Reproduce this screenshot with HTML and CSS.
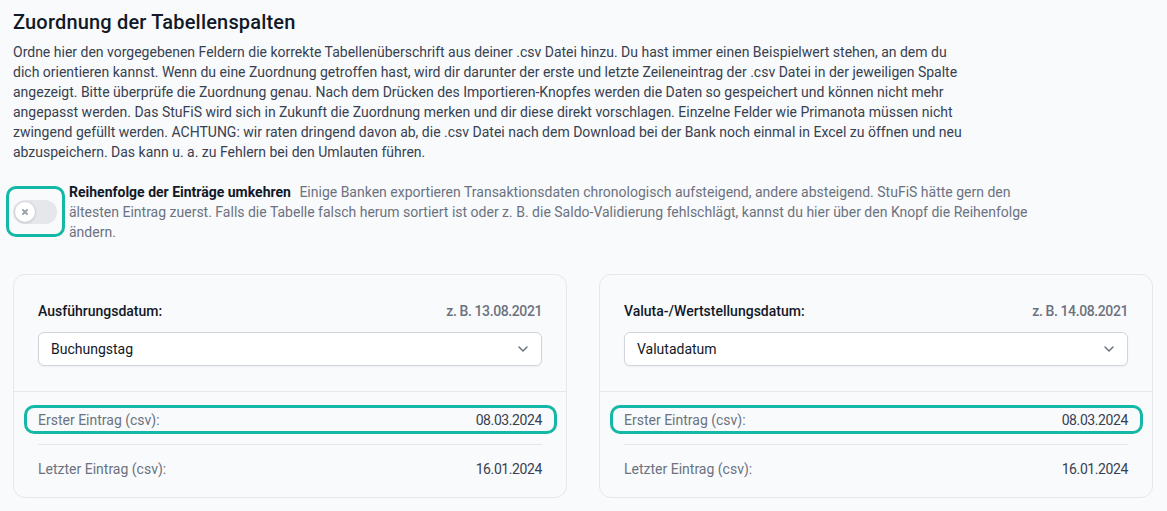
FILE: index.html
```html
<!DOCTYPE html>
<html lang="de">
<head>
<meta charset="utf-8">
<title>Zuordnung der Tabellenspalten</title>
<link rel="stylesheet" href="styles.css">
</head>
<body>
<main class="page">
  <h2 class="title">Zuordnung der Tabellenspalten</h2>
  <p class="intro">Ordne hier den vorgegebenen Feldern die korrekte Tabellenüberschrift aus deiner .csv Datei hinzu. Du hast immer einen Beispielwert stehen, an dem du dich orientieren kannst. Wenn du eine Zuordnung getroffen hast, wird dir darunter der erste und letzte Zeileneintrag der .csv Datei in der jeweiligen Spalte angezeigt. Bitte überprüfe die Zuordnung genau. Nach dem Drücken des Importieren-Knopfes werden die Daten so gespeichert und können nicht mehr angepasst werden. Das StuFiS wird sich in Zukunft die Zuordnung merken und dir diese direkt vorschlagen. Einzelne Felder wie Primanota müssen nicht zwingend gefüllt werden. ACHTUNG: wir raten dringend davon ab, die .csv Datei nach dem Download bei der Bank noch einmal in Excel zu öffnen und neu abzuspeichern. Das kann u. a. zu Fehlern bei den Umlauten führen.</p>

  <div class="switch-group">
    <div class="switch-wrap">
      <button class="switch" type="button" role="switch" aria-checked="false">
        <span class="knob">
          <svg viewBox="0 0 12 12" fill="none" aria-hidden="true"><path d="M4 8l2-2m0 0l2-2M6 6L4 4m2 2l2 2" stroke="currentColor" stroke-width="2" stroke-linecap="round" stroke-linejoin="round"/></svg>
        </span>
      </button>
    </div>
    <p class="switch-text"><strong class="switch-label">Reihenfolge der Einträge umkehren</strong> Einige Banken exportieren Transaktionsdaten chronologisch aufsteigend, andere absteigend. StuFiS hätte gern den ältesten Eintrag zuerst. Falls die Tabelle falsch herum sortiert ist oder z. B. die Saldo-Validierung fehlschlägt, kannst du hier über den Knopf die Reihenfolge ändern.</p>
  </div>

  <div class="cards">
    <section class="card">
      <div class="card-head">
        <div class="field-row">
          <span class="field-label">Ausführungsdatum:</span>
          <span class="example">z. B. 13.08.2021</span>
        </div>
        <div class="select">
          <span>Buchungstag</span>
          <svg class="chevron" viewBox="0 0 20 20" fill="none" aria-hidden="true"><path d="M6 8l4 4 4-4" stroke="currentColor" stroke-width="1.5" stroke-linecap="round" stroke-linejoin="round"/></svg>
        </div>
      </div>
      <dl class="rows">
        <div class="row highlight"><dt>Erster Eintrag (csv):</dt><dd>08.03.2024</dd></div>
        <div class="row"><dt>Letzter Eintrag (csv):</dt><dd>16.01.2024</dd></div>
      </dl>
    </section>

    <section class="card">
      <div class="card-head">
        <div class="field-row">
          <span class="field-label">Valuta-/Wertstellungsdatum:</span>
          <span class="example">z. B. 14.08.2021</span>
        </div>
        <div class="select">
          <span>Valutadatum</span>
          <svg class="chevron" viewBox="0 0 20 20" fill="none" aria-hidden="true"><path d="M6 8l4 4 4-4" stroke="currentColor" stroke-width="1.5" stroke-linecap="round" stroke-linejoin="round"/></svg>
        </div>
      </div>
      <dl class="rows">
        <div class="row highlight"><dt>Erster Eintrag (csv):</dt><dd>08.03.2024</dd></div>
        <div class="row"><dt>Letzter Eintrag (csv):</dt><dd>16.01.2024</dd></div>
      </dl>
    </section>
  </div>
</main>
</body>
</html>
```
FILE: styles.css
```css
* {
  box-sizing: border-box;
}

body {
  margin: 0;
  background: #f9fafb;
  font-family: Roboto, "Liberation Sans", sans-serif;
  font-size: 14px;
  line-height: 20px;
  color: #374151;
}

.page {
  padding: 8px 14px 0 13px;
}

.title {
  margin: 0;
  font-size: 20px;
  line-height: 28px;
  font-weight: 500;
  letter-spacing: 0.18px;
  color: #111827;
}

.intro {
  margin: 6px 0 0;
  max-width: 960px;
  color: #374151;
}

/* toggle */
.switch-group {
  margin-top: 20px;
  display: flex;
  align-items: center;
  gap: 12px;
}

.switch-wrap {
  position: relative;
  flex: none;
  display: flex;
}

.switch-wrap::after {
  content: "";
  position: absolute;
  top: -14px;
  bottom: -13px;
  left: -7px;
  right: -8px;
  border: 3px solid #14b8a6;
  border-radius: 10px;
  pointer-events: none;
}

.switch {
  width: 44px;
  height: 24px;
  padding: 2px;
  border: 0;
  border-radius: 12px;
  background: #e5e7eb;
  display: flex;
  align-items: center;
  cursor: pointer;
}

.knob {
  width: 20px;
  height: 20px;
  border-radius: 50%;
  background: #fff;
  box-shadow: 0 1px 3px rgba(0, 0, 0, 0.12), 0 0 0 1px rgba(17, 24, 39, 0.05);
  display: flex;
  align-items: center;
  justify-content: center;
  color: #9ca3af;
}

.knob svg {
  width: 12px;
  height: 12px;
}

.switch-text {
  margin: 0;
  max-width: 960px;
  color: #6b7280;
}

.switch-label {
  font-weight: 700;
  color: #111827;
  margin-right: 5px;
}

/* cards */
.cards {
  margin-top: 32px;
  display: grid;
  grid-template-columns: 1fr 1fr;
  gap: 32px;
}

.card {
  border: 1px solid #e5e7eb;
  border-radius: 12px;
  background: #f9fafb;
}

.card-head {
  padding: 26px 24px 25px;
  border-bottom: 1px solid #e5e7eb;
}

.field-row {
  display: flex;
  justify-content: space-between;
}

.field-label {
  font-weight: 500;
  color: #111827;
}

.example {
  font-weight: 500;
  color: #6b7280;
  letter-spacing: -0.4px;
}

.select {
  margin-top: 11px;
  height: 34px;
  padding: 0 8px 0 12px;
  border: 1px solid #d1d5db;
  border-radius: 6px;
  background: #fff;
  box-shadow: 0 1px 2px rgba(0, 0, 0, 0.05);
  display: flex;
  align-items: center;
  justify-content: space-between;
  color: #111827;
}

.chevron {
  width: 20px;
  height: 20px;
  color: #6b7280;
}

.rows {
  margin: 0;
  padding: 4px 24px;
}

.row {
  position: relative;
  display: flex;
  justify-content: space-between;
  padding: 14px 0;
}

.row + .row {
  border-top: 1px solid #e5e7eb;
}

.row dt {
  color: #6b7280;
}

.row dd {
  margin: 0;
  color: #374151;
  letter-spacing: -0.4px;
}

.row.highlight::after {
  content: "";
  position: absolute;
  top: 9px;
  bottom: 10px;
  left: -14px;
  right: -15px;
  border: 3px solid #14b8a6;
  border-radius: 10px;
  pointer-events: none;
}
```
